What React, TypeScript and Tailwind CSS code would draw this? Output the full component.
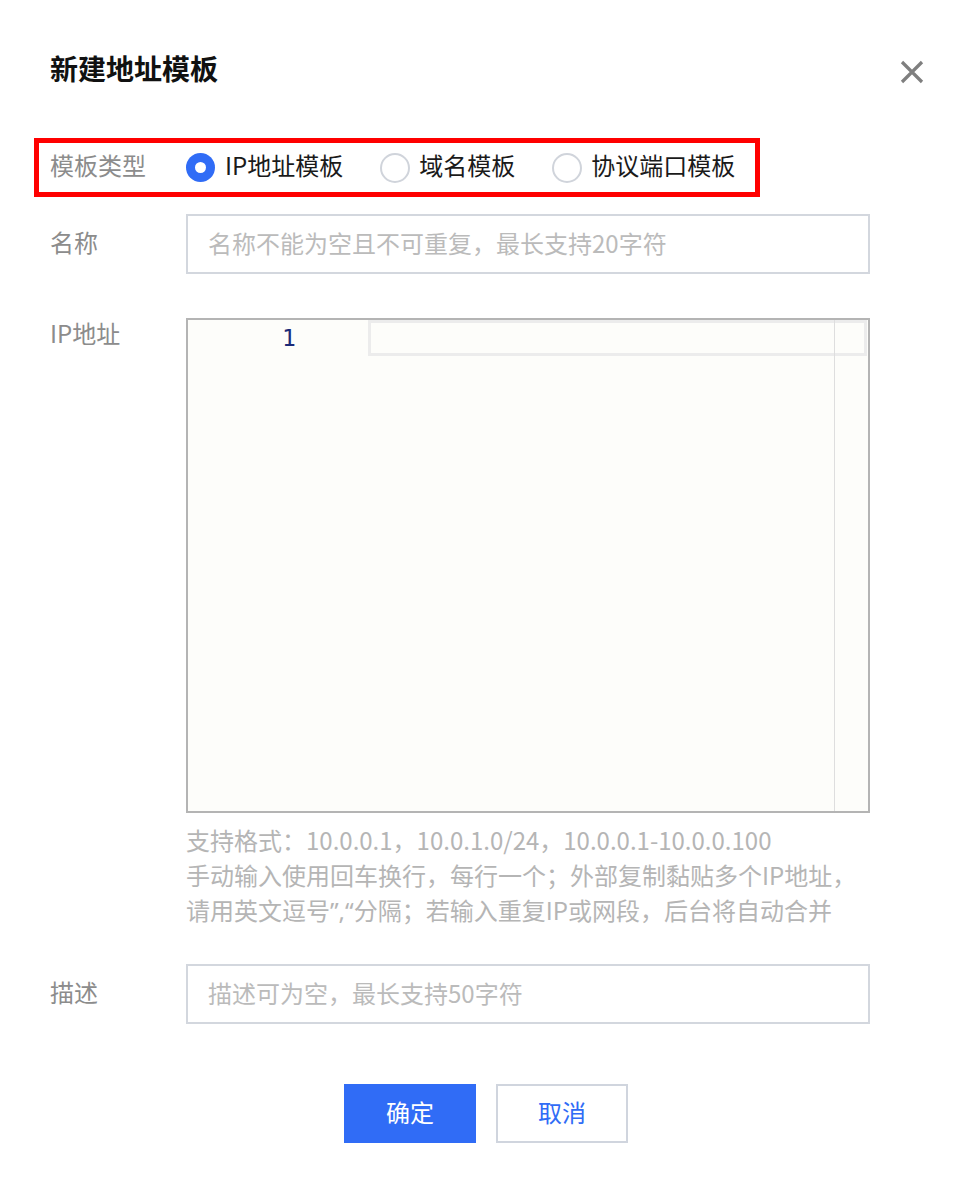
export default function App() {
  return (
    <div className="w-[972px] h-[1192px] bg-white px-[50px] pt-[48px] font-['Noto_Sans_CJK_SC','Noto_Sans',sans-serif] text-[24px]">
      <div className="flex items-start justify-between">
        <h1 className="text-[28px] leading-[40px] font-bold text-[#111111] pb-[2px]">新建地址模板</h1>
        <svg className="mt-[12px] mr-[-2px]" width="24" height="24" viewBox="0 0 24 24">
          <path d="M2 2 L22 22 M22 2 L2 22" stroke="#7f7f7f" strokeWidth="3.2" fill="none" />
        </svg>
      </div>

      <div className="mt-[48px] ml-[-16px] w-[726px] h-[59px] border-[5px] border-[#ff0000] flex items-center pl-[11px]">
        <div className="w-[136px] text-[#8c8c8c] leading-[36px] pb-[5px]">模板类型</div>
        <div className="flex items-center gap-[37px]">
          <div className="flex items-center gap-[10px]">
            <span className="w-[29px] h-[29px] rounded-full bg-[#306cf6] flex items-center justify-center">
              <span className="w-[11px] h-[11px] rounded-full bg-white" />
            </span>
            <span className="text-[#1a1a1a] leading-[36px] pb-[5px]">IP地址模板</span>
          </div>
          <div className="flex items-center gap-[9px]">
            <span className="w-[30px] h-[30px] rounded-full border-2 border-[#d0d4db] bg-white" />
            <span className="text-[#1a1a1a] leading-[36px] pb-[5px]">域名模板</span>
          </div>
          <div className="flex items-center gap-[9px]">
            <span className="w-[30px] h-[30px] rounded-full border-2 border-[#d0d4db] bg-white" />
            <span className="text-[#1a1a1a] leading-[36px] pb-[5px]">协议端口模板</span>
          </div>
        </div>
      </div>

      <div className="mt-[17px] flex items-center">
        <div className="w-[136px] text-[#8c8c8c] leading-[36px] pb-[4px]">名称</div>
        <div className="w-[684px] h-[60px] border-2 border-[#d3d7de] pl-[20px] pb-[3px] flex items-center text-[#bbbbbb]">
          名称不能为空且不可重复，最长支持20字符
        </div>
      </div>

      <div className="mt-[44px] flex items-start">
        <div className="w-[136px] text-[#8c8c8c] leading-[36px] mt-[-3px]">IP地址</div>
        <div className="w-[684px] h-[495px] border-2 border-[#b4b4b4] bg-[#fdfdfa] flex">
          <div className="w-[180px] shrink-0 pl-[94px] leading-[36px] text-[23px] text-[#1b2a78] font-['DejaVu_Sans_Mono',monospace]">
            1
          </div>
          <div className="flex-1 relative">
            <div className="h-[36px] border-[3px] border-[#ececec] mr-[1px]" />
            <div className="absolute left-[466px] top-0 bottom-0 w-px bg-[#dedede]" />
          </div>
        </div>
      </div>

      <div className="ml-[136px] mt-[9px] text-[#b5b5b5] leading-[35px]">
        <div>支持格式：10.0.0.1，10.0.1.0/24，10.0.0.1-10.0.0.100</div>
        <div>手动输入使用回车换行，每行一个；外部复制黏贴多个IP地址，</div>
        <div>
          请用英文逗号<span className="font-['Noto_Sans',sans-serif]">”,“</span>分隔；若输入重复IP或网段，后台将自动合并
        </div>
      </div>

      <div className="mt-[36px] flex items-center">
        <div className="w-[136px] text-[#8c8c8c] leading-[36px] pb-[4px]">描述</div>
        <div className="w-[684px] h-[60px] border-2 border-[#d3d7de] pl-[20px] pb-[3px] flex items-center text-[#bbbbbb]">
          描述可为空，最长支持50字符
        </div>
      </div>

      <div className="mt-[60px] flex justify-center gap-[20px]">
        <button className="w-[132px] h-[59px] bg-[#306cf6] text-white flex items-center justify-center pb-[3px]">确定</button>
        <button className="w-[132px] h-[59px] border-2 border-[#d0d5de] bg-white text-[#306cf6] flex items-center justify-center pb-[3px]">取消</button>
      </div>
    </div>
  );
}
